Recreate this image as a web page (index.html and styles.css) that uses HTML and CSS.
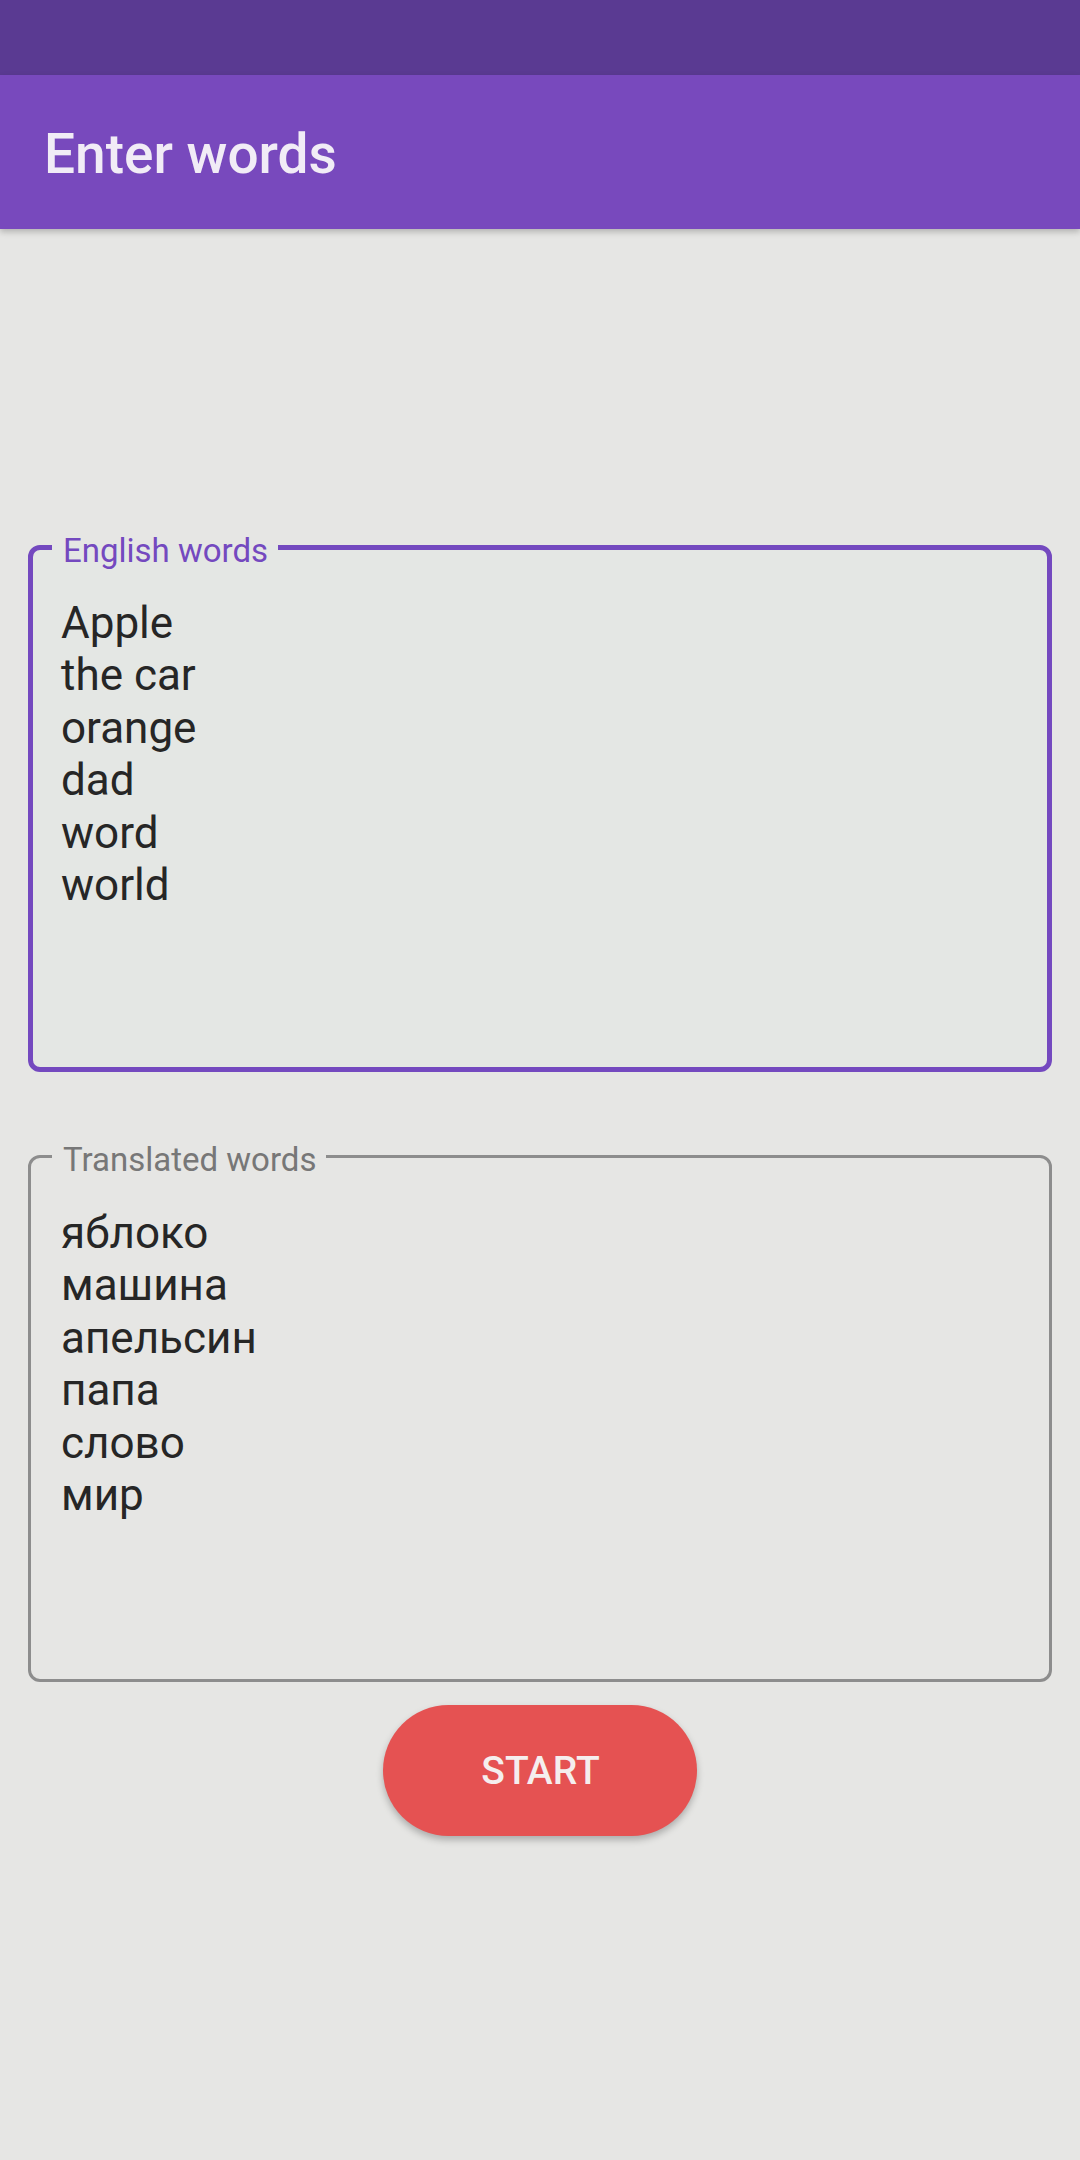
FILE: index.html
```html
<!DOCTYPE html>
<html lang="en">
<head>
<meta charset="utf-8">
<title>Enter words</title>
<link rel="stylesheet" href="styles.css">
</head>
<body>
<div class="screen">
  <div class="status-bar"></div>
  <header class="app-bar">
    <h1 class="app-title">Enter words</h1>
  </header>
  <main class="content">
    <fieldset class="field field--focused">
      <legend class="field-label">English words</legend>
      <div class="field-text">Apple<br>the car<br>orange<br>dad<br>word<br>world</div>
    </fieldset>
    <fieldset class="field field--idle">
      <legend class="field-label">Translated words</legend>
      <div class="field-text">яблоко<br>машина<br>апельсин<br>папа<br>слово<br>мир</div>
    </fieldset>
    <div class="actions">
      <button class="start-btn" type="button">START</button>
    </div>
  </main>
</div>
</body>
</html>
```

FILE: styles.css
```css
html, body {
  margin: 0;
  padding: 0;
}

body {
  background: #e6e6e4;
  font-family: Roboto, "Noto Sans", "Liberation Sans", sans-serif;
  width: 1080px;
  height: 2160px;
  overflow: hidden;
}

.screen {
  display: flex;
  flex-direction: column;
  min-height: 2160px;
}

.status-bar {
  height: 75px;
  background: #5a3a92;
}

.app-bar {
  height: 154px;
  background: #7849bd;
  display: flex;
  align-items: center;
  padding: 4px 0 0 44px;
  box-sizing: border-box;
  box-shadow: 0 3px 6px rgba(0, 0, 0, 0.22);
  position: relative;
  z-index: 1;
}

.app-title {
  margin: 0;
  font-size: 55px;
  font-weight: 500;
  color: #f1ecf6;
  line-height: 64px;
}

.content {
  display: flex;
  flex-direction: column;
  padding-top: 295px;
}

.field {
  margin: 0 28px;
  border-style: solid;
  border-radius: 12px;
  padding: 0;
  min-width: 0;
}

.field--focused {
  border-width: 5px;
  border-color: #7449bf;
  padding-left: 19px;
  background: #e4e7e4;
}

.field--idle {
  border-width: 3px;
  border-color: #8d8d8d;
  padding-left: 21px;
  margin-top: 61px;
}

.field-label {
  font-size: 33px;
  line-height: 40px;
  padding: 7px 10px 0 11px;
}

.field--focused .field-label {
  color: #7449bf;
}

.field--idle .field-label {
  color: #777777;
}

.field-text {
  box-sizing: border-box;
  padding: 26px 0 0 9px;
  font-size: 44px;
  line-height: 52.4px;
  color: #262626;
}

.field--focused .field-text {
  height: 496px;
}

.field--idle .field-text {
  height: 499px;
  padding-top: 27px;
}

.actions {
  display: flex;
  justify-content: center;
  padding-top: 23px;
}

.start-btn {
  width: 314px;
  height: 131px;
  border: none;
  border-radius: 66px;
  background: #e55252;
  color: #f5eeee;
  font-family: Roboto, "Noto Sans", "Liberation Sans", sans-serif;
  font-size: 39px;
  font-weight: 500;
  letter-spacing: 0;
  box-shadow: 0 4px 7px rgba(0, 0, 0, 0.25);
  padding: 0 0 0 1px;
}
```
